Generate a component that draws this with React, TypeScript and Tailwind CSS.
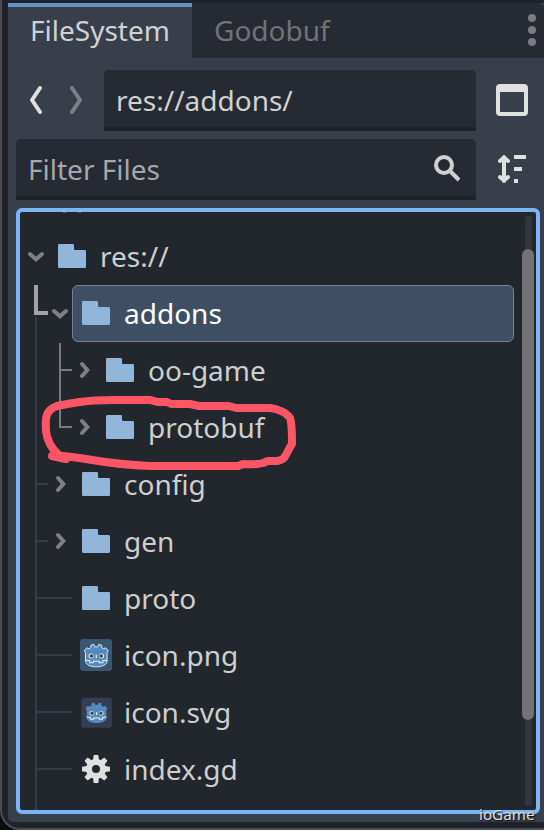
import type { ReactNode } from "react";

type Chevron = "down" | "right" | "none";
type IconKind = "folder" | "png" | "svg" | "script";

interface Entry {
  name: string;
  depth: number;
  chevron: Chevron;
  icon: IconKind;
  selected?: boolean;
  last?: boolean;
}

const entries: Entry[] = [
  { name: "res://", depth: 0, chevron: "down", icon: "folder" },
  { name: "addons", depth: 1, chevron: "down", icon: "folder", selected: true },
  { name: "oo-game", depth: 2, chevron: "right", icon: "folder" },
  { name: "protobuf", depth: 2, chevron: "right", icon: "folder", last: true },
  { name: "config", depth: 1, chevron: "right", icon: "folder" },
  { name: "gen", depth: 1, chevron: "right", icon: "folder" },
  { name: "proto", depth: 1, chevron: "none", icon: "folder" },
  { name: "icon.png", depth: 1, chevron: "none", icon: "png" },
  { name: "icon.svg", depth: 1, chevron: "none", icon: "svg" },
  { name: "index.gd", depth: 1, chevron: "none", icon: "script" },
];

function GodotFace({ outlined }: { outlined: boolean }) {
  return (
    <svg width="32" height="32" viewBox="0 0 32 32">
      {outlined ? (
        <rect width="32" height="32" rx="3" fill="#3b5670" />
      ) : (
        <rect x="1.3" y="1.7" width="30.5" height="30" rx="2.5" fill="#363d52" />
      )}
      <g transform={outlined ? "translate(16.3 16.8)" : "translate(16.5 17) scale(0.91)"}>
        <path
          d="M-12 -5L-9.5 -8L-7 -7L-5.5 -8L-5.5 -10.5L-2.5 -11.5L-1.5 -9H1.5L2.5 -11.5L5.5 -10.5L5.5 -8L7 -7L9.5 -8L12 -5L10.8 -3V5C10.8 9 6 11 0 11S-10.8 9 -10.8 5V-3Z"
          fill="#538bc1"
          stroke={outlined ? "#dce7f0" : "none"}
          strokeWidth="1"
          strokeLinejoin="round"
        />
        <path
          d="M-11 4.5L-6.5 5V7H-3V5.5H3V7H6.5V5L11 4.5"
          fill="none"
          stroke="#e6edf3"
          strokeWidth="1.1"
        />
        <circle cx="-5.2" cy="0.2" r="2.5" fill="#f0f3f5" />
        <circle cx="5.2" cy="0.2" r="2.5" fill="#f0f3f5" />
        <circle cx="-4.9" cy="0.2" r="1.8" fill="#3d4147" />
        <circle cx="4.9" cy="0.2" r="1.8" fill="#3d4147" />
        <path d="M0 -1V2.4" stroke="#e6edf3" strokeWidth="1.2" />
      </g>
    </svg>
  );
}

function EntryIcon({ kind }: { kind: IconKind }) {
  if (kind === "png") return <GodotFace outlined />;
  if (kind === "svg") return <GodotFace outlined={false} />;
  if (kind === "script") {
    return (
      <svg width="32" height="32" viewBox="-16 -16 32 32" fill="#e0e0e0">
        {[0, 45, 90, 135].map((angle) => (
          <path key={angle} transform={`rotate(${angle})`} d="M-2.2 -14H2.2L3.2 -8V8L2.2 14H-2.2L-3.2 8V-8Z" />
        ))}
        <circle r="10" />
        <circle r="4" fill="#22262d" />
      </svg>
    );
  }
  return (
    <svg width="32" height="32" viewBox="0 0 32 32">
      <path
        d="M3.2 4H16.8Q18 4 18 5.2V8.8Q18 10 19.2 10H28.8Q30 10 30 11.2V26.8Q30 28 28.8 28H3.2Q2 28 2 26.8V5.2Q2 4 3.2 4Z"
        fill="#92b5da"
      />
    </svg>
  );
}

function Chevrons({ kind }: { kind: Chevron }) {
  if (kind === "none") return null;
  return (
    <path
      d={kind === "down" ? "M-6 -3L0 2.3L6 -3" : "M-2 -7L3.3 -1L-2 5"}
      fill="none"
      stroke="#7d8085"
      strokeWidth="4"
      strokeLinecap="round"
    />
  );
}

function Guides({ entry }: { entry: Entry }) {
  const width = 28 + entry.depth * 24;
  const arrowX = 16 + entry.depth * 24;
  return (
    <svg width={width} height="57" className="shrink-0" fill="none">
      {entry.selected ? (
        <>
          <path d="M16 0V28H28" stroke="#a2a3a6" strokeWidth="4" />
          <path d="M16 32V57" stroke="#393c44" strokeWidth="2" />
        </>
      ) : (
        entry.depth > 0 && <path d="M16 0V57" stroke="#393c44" strokeWidth="2" />
      )}
      {entry.depth === 1 && !entry.selected && (
        <path d={entry.chevron === "none" ? "M16 28H52" : "M16 28H28"} stroke="#393c44" strokeWidth="2" />
      )}
      {entry.depth === 2 && (
        <path d={entry.last ? "M40 0V28H52" : "M40 1V57M40 28H52"} stroke="#77797e" strokeWidth="2" />
      )}
      <g transform={`translate(${arrowX} 29)`}>
        <Chevrons kind={entry.chevron} />
      </g>
    </svg>
  );
}

function TreeRow({ entry }: { entry: Entry }) {
  return (
    <div className="flex h-[57px] shrink-0">
      <Guides entry={entry} />
      <div
        className={
          entry.selected
            ? "flex w-[442px] items-center gap-3 rounded-md border border-[#7b828d] bg-[#3e4f64] pb-px pl-[7px] text-white"
            : "flex items-center gap-3 pb-px pl-2 text-[#cdced0]"
        }
      >
        <EntryIcon kind={entry.icon} />
        <span>{entry.name}</span>
      </div>
    </div>
  );
}

function Field({ children, className }: { children: ReactNode; className: string }) {
  return (
    <div className={`flex h-[61px] items-center rounded-t-[5px] border-b-4 border-[#1e2127] bg-[#262a33] pt-[3px] pl-3 ${className}`}>
      {children}
    </div>
  );
}

export default function App() {
  return (
    <div className="relative h-[830px] w-[544px] overflow-hidden bg-[#0b0c0e] font-['Noto_Sans',sans-serif] text-[28px] leading-[38px] whitespace-nowrap">
      <div className="flex h-full flex-col rounded-bl-[20px] border-b-2 border-l-2 border-[#4b4d50] bg-[#1f2229] pt-[3px] pb-[6px] pl-[6px]">
        <div className="flex min-h-0 flex-1 flex-col overflow-hidden rounded-bl-[5px] bg-[#383e4a]">
          <div className="flex h-[55px] shrink-0 rounded-tr-md bg-[#262a33]">
            <div className="w-[184px] border-t-4 border-[#6495c9] bg-[#383e4a] pt-1 pl-[22px] text-[#d0d1d3]">
              FileSystem
            </div>
            <div className="flex-1 pt-2 pl-[22px] text-[#707378]">Godobuf</div>
            <svg width="24" height="55" fill="#7b7d82">
              <circle cx="12" cy="15" r="4" />
              <circle cx="12" cy="27" r="4" />
              <circle cx="12" cy="39" r="4" />
            </svg>
          </div>

          <div className="flex shrink-0 items-start pt-3 pl-2">
            <svg width="88" height="60" fill="none" strokeWidth="4" strokeLinecap="round" strokeLinejoin="round">
              <path d="M24 18L16 30L24 42" stroke="#e0e0e0" />
              <path d="M56 18L64 30L56 42" stroke="#7d8087" />
            </svg>
            <Field className="w-[372px] text-[#d0d1d3]">res://addons/</Field>
            <svg width="32" height="32" className="mt-3.5 ml-5">
              <path
                fillRule="evenodd"
                d="M4 0H28Q32 0 32 4V28Q32 32 28 32H4Q0 32 0 28V4Q0 0 4 0ZM4 8V28H28V8Z"
                fill="#e0e0e0"
              />
            </svg>
          </div>

          <div className="flex shrink-0 items-start pt-2 pl-2">
            <Field className="w-[460px] justify-between pr-[13px] text-[#a5a7aa]">
              <span>Filter Files</span>
              <svg width="32" height="32" className="mb-0.5" fill="none" stroke="#cfd0d1" strokeWidth="4">
                <circle cx="13" cy="13" r="8" />
                <path d="M18.5 18.5L28 28" />
              </svg>
            </Field>
            <svg width="32" height="32" className="mt-3.5 ml-5" fill="#e0e0e0">
              <path
                d="M8 4V28M4 8L8 4.5L12 8M4 24L8 27.5L12 24"
                fill="none"
                stroke="#e0e0e0"
                strokeWidth="4"
                strokeLinecap="round"
                strokeLinejoin="round"
              />
              <path d="M18 2H30V6H18ZM18 14H26V18H18ZM18 26H22V30H18Z" />
            </svg>
          </div>

          <div className="mt-2 ml-2 flex h-[606px] w-[524px] shrink-0 justify-between overflow-hidden rounded-md border-4 border-[#7ab6f6] bg-[#22262d]">
            <div className="flex flex-col">
              <svg width="70" height="16" className="shrink-0" fill="#777a7e">
                <path d="M43 0H46V0.8H43ZM58.5 0H61V0.8H58.5Z" />
              </svg>
              {entries.map((entry) => (
                <TreeRow key={entry.name} entry={entry} />
              ))}
              <div className="ml-[15px] h-3 w-0.5 bg-[#393c44]" />
            </div>
            <div className="mr-0.5 flex h-full w-3 flex-col items-center py-1">
              <div className="h-[33px] w-[7px] shrink-0 rounded-t-[3px] bg-[#33363e]" />
              <div className="h-[471px] w-3 shrink-0 rounded-full bg-[#707276]" />
              <div className="w-[7px] flex-1 rounded-b-[3px] bg-[#33363e]" />
            </div>
          </div>
        </div>
      </div>

      <svg
        className="absolute top-0 left-0"
        width="544"
        height="830"
        fill="none"
        stroke="#ff5564"
        strokeWidth="8"
        strokeLinecap="round"
        strokeLinejoin="round"
      >
        <path d="M58 454C50 447 47 440 46 431C45 417 46 410 57 406C66 404 72 403 80 402C94 400 99 400 113 400H149C153 400 155 402 159 402H167L171 404H190L199 406H229L236 408H270C279 409 287 413 290 418C292 423 292 430 292 444C289 448 287 454 284 458C280 462 275 461 268 461L263 463C256 465 250 464 243 464L238 466H150C126 465 110 463 92 460C82 458 73 457 63 456L52 456L66 459" />
      </svg>
      <span className="absolute top-[803px] left-[479px] text-[15.2px] leading-[22px] text-[#dedede] [text-shadow:1px_1px_1px_#111]">
        ioGame
      </span>
    </div>
  );
}
